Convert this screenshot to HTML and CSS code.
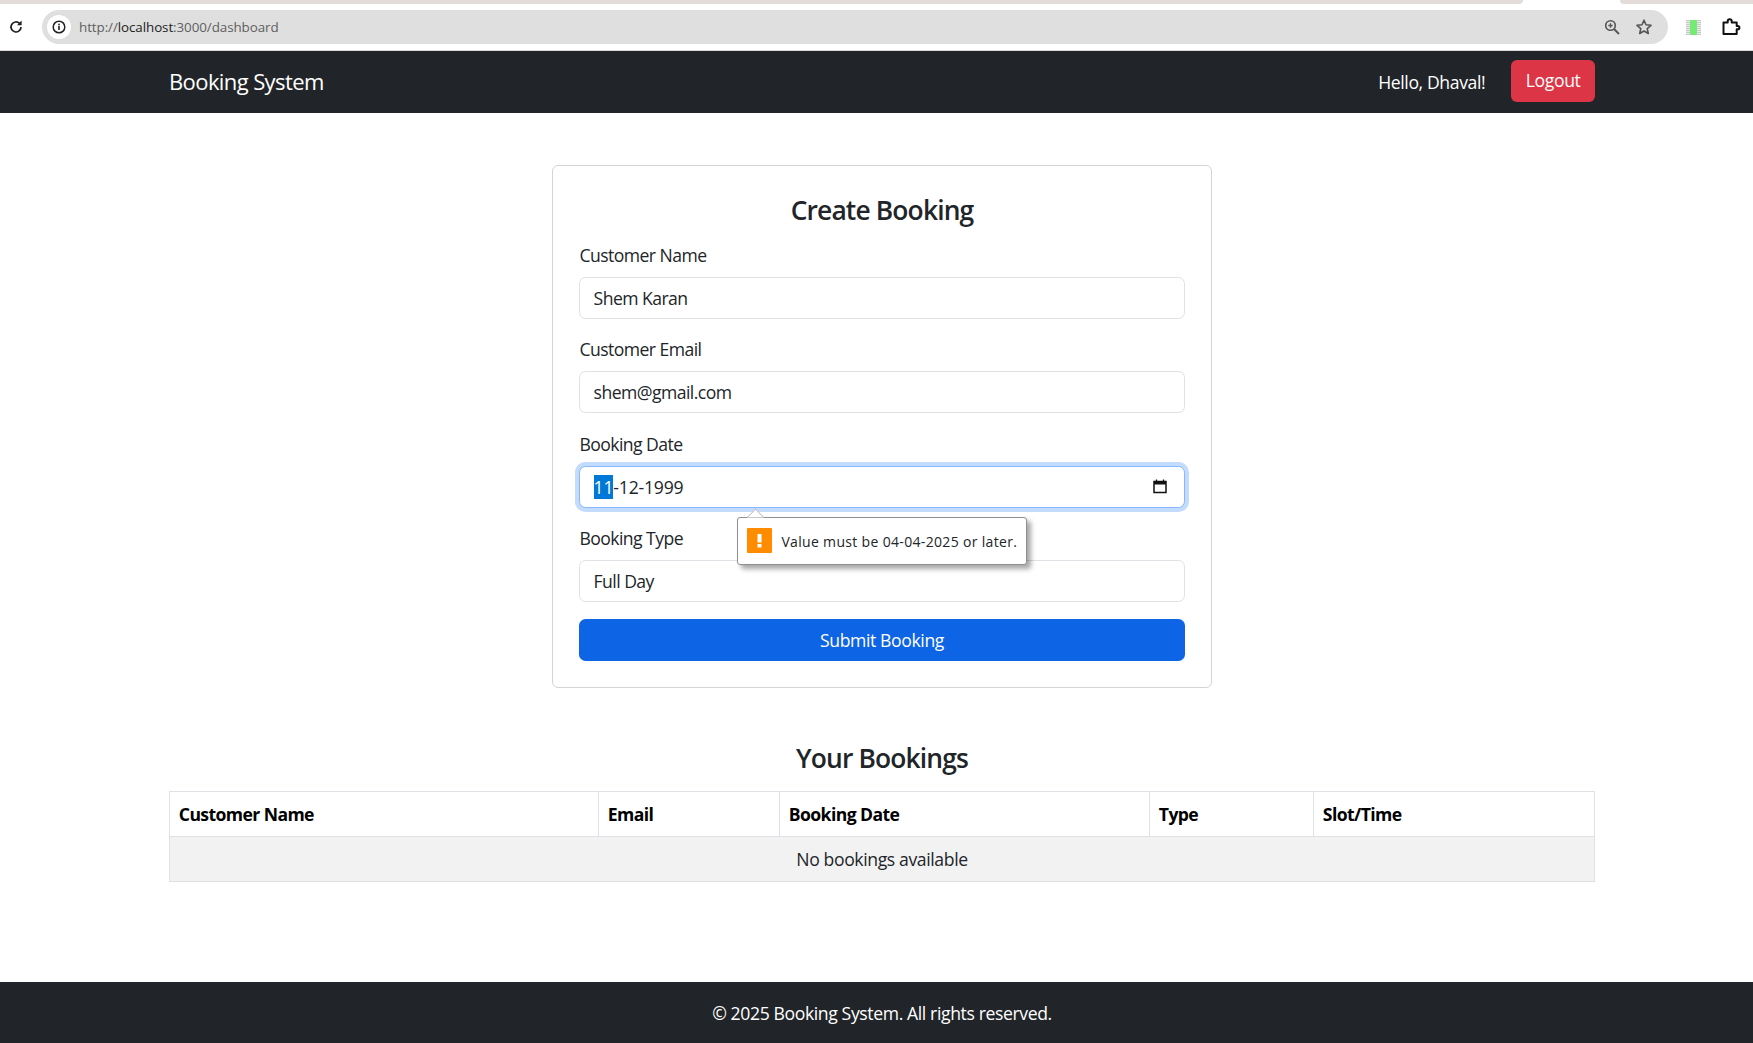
FILE: index.html
```html
<!DOCTYPE html>
<html lang="en">
<head>
<meta charset="utf-8">
<title>Booking System</title>
<link rel="stylesheet" href="styles.css">
</head>
<body>
<div class="chrome">
  <div class="tabstrip"><div class="strip-left"></div><div class="strip-gap"></div><div class="strip-right"></div></div>
  <div class="toolbar">
    <svg class="reload" width="16" height="16" viewBox="0 0 16 16"><path d="M13 8a5 5 0 1 1-1.500-3.600" fill="none" stroke="#222" stroke-width="1.700"/><path d="M13.600 1.600v4.600H9z" fill="#222"/></svg>
    <div class="omnibox">
      <span class="site-info"><svg width="16" height="16" viewBox="0 0 16 16"><circle cx="8" cy="8" r="5.800" fill="none" stroke="#222" stroke-width="1.500"/><rect x="7.200" y="7" width="1.600" height="4" fill="#222"/><rect x="7.200" y="4.700" width="1.600" height="1.600" fill="#222"/></svg></span>
      <span class="url"><span class="url-dim">http://</span>localhost<span class="url-dim">:3000/dashboard</span></span>
      <svg class="zoom-icon" width="18" height="18" viewBox="0 0 18 18"><circle cx="7.500" cy="7.500" r="4.800" fill="none" stroke="#555" stroke-width="1.600"/><path d="M11 11l5 5" stroke="#555" stroke-width="1.900"/><path d="M5.300 7.500h4.400M7.500 5.300v4.400" stroke="#555" stroke-width="1.300"/></svg>
      <svg class="star-icon" width="18" height="18" viewBox="0 0 18 18"><path d="M9 2.200l2 4.600 5 .5-3.800 3.300 1.100 4.900L9 13l-4.300 2.500 1.100-4.900L2 7.300l5-.5z" fill="none" stroke="#555" stroke-width="1.600" stroke-linejoin="round"/></svg>
    </div>
    <div class="ext-icon"><span class="ext-green"></span></div>
    <svg class="puzzle" width="20" height="20" viewBox="0 0 20 20"><path d="M2.500 5.500h4.200V4.200a2 2 0 0 1 4 0v1.300h5v3.600h1.100a1.600 1.600 0 0 1 0 3.200h-1.100v4.800H2.500z" fill="none" stroke="#111" stroke-width="2" stroke-linejoin="round"/></svg>
  </div>
</div>

<nav class="navbar">
  <div class="container nav-inner">
    <a class="brand">Booking System</a>
    <div class="nav-right">
      <span class="hello">Hello, Dhaval!</span>
      <button class="btn-logout"><span class="logout-text">Logout</span></button>
    </div>
  </div>
</nav>

<main class="main">
  <div class="container">
    <form class="card">
      <h3 class="title form-title">Create Booking</h3>
      <div class="group">
        <label class="label">Customer Name</label>
        <input class="control" type="text" value="Shem Karan">
      </div>
      <div class="group">
        <label class="label">Customer Email</label>
        <input class="control" type="text" value="shem@gmail.com">
      </div>
      <div class="group date-group">
        <label class="label">Booking Date</label>
        <div class="control date-control">
          <span class="date-value"><span class="date-sel">11</span>-12-1999</span>
          <svg class="cal" width="16" height="16" viewBox="0 0 16 16"><path d="M2 3.500h12V14.500H2z" fill="none" stroke="#111" stroke-width="1.500"/><path d="M2 3h12v3.500H2z" fill="#111"/><path d="M4.500 1.500v2M11.500 1.500v2" stroke="#111" stroke-width="1.300"/></svg>
        </div>
        <div class="bubble">
          <span class="bubble-arrow"></span>
          <span class="warn"><svg width="25" height="25" viewBox="0 0 25 25"><rect x="10.500" y="6" width="4" height="8.500" fill="#fff"/><rect x="10.500" y="16" width="4" height="3.500" fill="#fff"/></svg></span>
          <span class="bubble-text">Value must be 04-04-2025 or later.</span>
        </div>
      </div>
      <div class="group last-group">
        <label class="label">Booking Type</label>
        <div class="control">Full Day</div>
      </div>
      <button class="btn-submit" type="button">Submit Booking</button>
    </form>

    <h3 class="title bookings-title">Your Bookings</h3>
    <table class="table">
      <colgroup><col class="c1"><col class="c2"><col class="c3"><col class="c4"><col class="c5"></colgroup>
      <thead><tr><th>Customer Name</th><th>Email</th><th>Booking Date</th><th>Type</th><th>Slot/Time</th></tr></thead>
      <tbody><tr class="empty"><td colspan="5">No bookings available</td></tr></tbody>
    </table>
  </div>
</main>

<footer class="footer">© 2025 Booking System. All rights reserved.</footer>
</body>
</html>
```

FILE: styles.css
```css
* { box-sizing: border-box; }
html, body { margin: 0; height: 100%; }
body {
  display: flex;
  flex-direction: column;
  min-height: 1043px;
  font-family: "Open Sans", "Noto Sans", sans-serif;
  font-size: 17.6px;
  line-height: 26.4px;
  letter-spacing: -0.38px;
  color: #212529;
  background: #fff;
  overflow: hidden;
}
.chrome { flex: none; height: 51px; background: #fff; border-bottom: 1px solid #d8d8d8; }
.tabstrip { display: flex; height: 4px; }
.strip-left { width: 1523px; background: #e4dcd9; border-bottom-right-radius: 6px; }
.strip-gap { width: 97px; }
.strip-right { flex: 1; background: #e4dcd9; border-bottom-left-radius: 6px; }
.toolbar { display: flex; align-items: center; height: 34px; margin-top: 6px; padding-left: 8px; }
.reload { flex: none; }
.omnibox {
  display: flex;
  align-items: center;
  width: 1626px;
  height: 34px;
  margin-left: 18px;
  padding: 0 15px 0 5px;
  background: #dfdfdf;
  border-radius: 17px;
}
.site-info {
  display: flex;
  align-items: center;
  justify-content: center;
  width: 24px;
  height: 24px;
  border-radius: 50%;
  background: #fff;
}
.url {
  flex: 1;
  margin-left: 8px;
  font-size: 13.400px;
  letter-spacing: -0.08px;
  line-height: 20px;
  color: #222;
}
.url-dim { color: #606060; }
.star-icon { margin-left: 14px; }
.ext-icon {
  display: flex;
  justify-content: center;
  width: 15px;
  height: 15px;
  margin-left: 18px;
  background: repeating-linear-gradient(0deg, #c9c9c9 0 1px, #e9e9e9 1px 2px);
}
.ext-green { width: 7px; background: #74ec74; border-radius: 1px; }
.puzzle { margin-left: 20px; }

.navbar { flex: none; height: 62px; padding-left: 11px; background: #212529; color: #fff; }
.container { width: 1426px; margin: 0 auto; }
.nav-inner { display: flex; align-items: center; justify-content: space-between; height: 100%; }
.brand { font-size: 22px; line-height: 33px; letter-spacing: -0.6px; margin-top: -1px; }
.nav-right { display: flex; align-items: center; gap: 26px; margin-top: -2px; }
.hello { padding-top: 2px; }
.btn-logout {
  height: 41.400px;
  padding: 0 14.500px;
  border: 0;
  border-radius: 6px;
  background: #dc3545;
  color: #fff;
  font: inherit;
  letter-spacing: inherit;
}
.logout-text { display: block; margin-top: -2px; }

.main { flex: 1; padding: 52px 0 0 11px; }
.card {
  width: 660px;
  margin: 0 auto;
  padding: 26.400px;
  border: 1px solid #d3d4d6;
  border-radius: 6px;
}
.title {
  font-size: 26.400px;
  font-weight: 600;
  letter-spacing: -0.85px;
  text-align: center;
}
.form-title { margin: 0 0 11.600px; line-height: 37.700px; }
.group { position: relative; margin-bottom: 17.600px; }
.last-group { margin-bottom: 16.800px; }
.label { display: block; margin-bottom: 8.800px; letter-spacing: -0.55px; }
.control {
  display: block;
  width: 100%;
  height: 41.700px;
  padding: 6.600px 13.200px;
  border: 1px solid #dee2e6;
  border-radius: 6.600px;
  font: inherit;
  letter-spacing: -0.55px;
  color: #212529;
  background: #fff;
}
.date-control {
  display: flex;
  align-items: center;
  justify-content: space-between;
  border-color: #86b7fe;
  box-shadow: 0 0 0 4px #c2dbfe;
  padding-right: 16px;
  letter-spacing: -0.2px;
}
.date-sel { background: #0078d7; color: #fff; }
.cal { margin-top: -1px; }
.bubble {
  position: absolute;
  left: 158px;
  top: 86px;
  display: flex;
  align-items: center;
  width: 290px;
  height: 48px;
  padding: 0 9px;
  border: 1px solid #8f8f8f;
  border-radius: 3px;
  background: #fff;
  box-shadow: 4px 4px 5px rgba(0, 0, 0, 0.35);
  z-index: 2;
}
.bubble-arrow {
  position: absolute;
  left: 11px;
  top: -7px;
  width: 13px;
  height: 13px;
  transform: rotate(45deg);
  background: #fff;
  border-left: 1px solid #b5b5b5;
  border-top: 1px solid #b5b5b5;
  clip-path: polygon(0 0, 100% 0, 0 100%);
}
.warn {
  display: flex;
  flex: none;
  width: 25px;
  height: 25px;
  background: #ff8c00;
  border-radius: 1px;
}
.bubble-text {
  margin-left: 9px;
  margin-top: 3px;
  font-size: 14px;
  line-height: 20px;
  letter-spacing: 0.33px;
  white-space: nowrap;
}
.btn-submit {
  display: block;
  width: 100%;
  height: 41.700px;
  padding: 1px 0 0;
  border: 0;
  border-radius: 6.600px;
  background: #0d64e4;
  color: #fff;
  font: inherit;
  letter-spacing: inherit;
}
.bookings-title { margin: 53.800px 0 16.100px; line-height: 33.200px; }
.table { width: 100%; table-layout: fixed; border-collapse: collapse; border: 1px solid #dee2e6; }
.c1 { width: 429px; }
.c2 { width: 181px; }
.c3 { width: 370px; }
.c4 { width: 164px; }
.table th, .table td { height: 45px; padding: 8.800px; border: 1px solid #dee2e6; }
.table th { text-align: left; font-weight: 700; color: #000; letter-spacing: -0.6px; }
.empty td { text-align: center; background: #f2f2f2; }
.footer {
  flex: none;
  height: 61px;
  padding: 17.600px 0 0 11px;
  background: #212529;
  color: #fff;
  text-align: center;
}
```
